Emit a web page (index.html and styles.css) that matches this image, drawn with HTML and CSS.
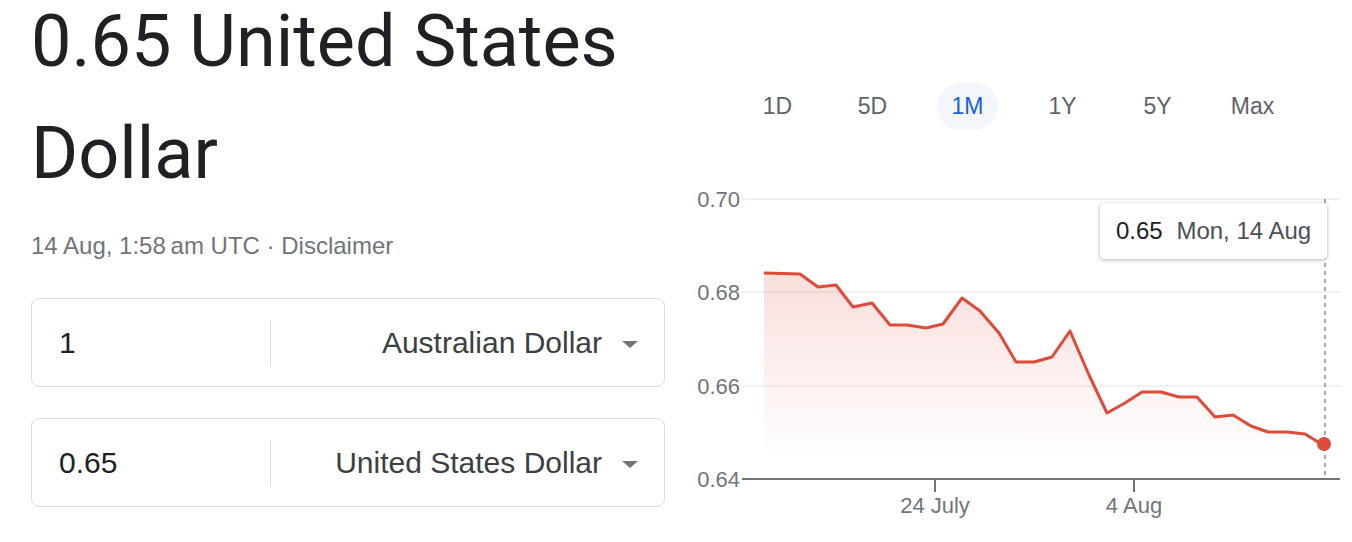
FILE: index.html
```html
<!DOCTYPE html>
<html lang="en">
<head>
    <meta charset="UTF-8">
    <meta name="viewport" content="width=device-width, initial-scale=1.0">
    <title>AUD to USD</title>
    <link rel="stylesheet" href="styles.css">
</head>
<body>
    <div class="page">
        <!-- Converter column -->
        <div class="converter">
            <h1 class="result">0.65 United States Dollar</h1>
            <div class="stamp">14 Aug, 1:58&#8201;am UTC · <span class="disclaimer">Disclaimer</span></div>

            <div class="field">
                <div class="amount">1</div>
                <div class="divider"></div>
                <div class="currency">Australian Dollar</div>
                <span class="caret"></span>
            </div>

            <div class="field">
                <div class="amount">0.65</div>
                <div class="divider"></div>
                <div class="currency">United States Dollar</div>
                <span class="caret"></span>
            </div>
        </div>

        <!-- Chart column -->
        <div class="chart">
            <div class="tabs">
                <div class="tab"><span>1D</span></div>
                <div class="tab"><span>5D</span></div>
                <div class="tab active"><span>1M</span></div>
                <div class="tab"><span>1Y</span></div>
                <div class="tab"><span>5Y</span></div>
                <div class="tab"><span>Max</span></div>
            </div>

            <div class="plot">
                <svg class="graph" width="672" height="350" viewBox="680 180 672 350">
                    <defs>
                        <linearGradient id="fade" x1="0" y1="273" x2="0" y2="450" gradientUnits="userSpaceOnUse">
                            <stop offset="0" stop-color="#db4437" stop-opacity="0.17"/>
                            <stop offset="1" stop-color="#db4437" stop-opacity="0.01"/>
                        </linearGradient>
                    </defs>

                    <!-- grid -->
                    <line class="grid" x1="742" y1="199" x2="1340" y2="199"/>
                    <line class="grid" x1="742" y1="292" x2="1340" y2="292"/>
                    <line class="grid" x1="742" y1="386" x2="1340" y2="386"/>

                    <text class="ylabel" x="740" y="207">0.70</text>
                    <text class="ylabel" x="740" y="300">0.68</text>
                    <text class="ylabel" x="740" y="394">0.66</text>
                    <text class="ylabel" x="740" y="487">0.64</text>

                    <!-- area + line -->
                    <path fill="url(#fade)" d="M764,273 L800,274 L818,287 L836,285 L853,307 L872,303 L890,325 L907,325 L926,328 L943,324 L962,298 L980,311 L999,333 L1016,362 L1034,362 L1052,357 L1070,331 L1089,375 L1107,413 L1125,403 L1142,392 L1161,392 L1179,397 L1197,397 L1215,417 L1233,415 L1251,426 L1268,432 L1287,432 L1305,434 L1323,445 L1323,450 L764,450 Z"/>
                    <polyline class="trend" points="764,273 800,274 818,287 836,285 853,307 872,303 890,325 907,325 926,328 943,324 962,298 980,311 999,333 1016,362 1034,362 1052,357 1070,331 1089,375 1107,413 1125,403 1142,392 1161,392 1179,397 1197,397 1215,417 1233,415 1251,426 1268,432 1287,432 1305,434 1323,445"/>

                    <line class="cursor" x1="1325" y1="199" x2="1325" y2="479"/>

                    <!-- x axis -->
                    <line class="axis" x1="742" y1="479" x2="1340" y2="479"/>
                    <line class="tick" x1="935" y1="479" x2="935" y2="492"/>
                    <line class="tick" x1="1134" y1="479" x2="1134" y2="492"/>
                    <text class="xlabel" x="935" y="513">24 July</text>
                    <text class="xlabel" x="1134" y="513">4 Aug</text>

                    <circle class="dot" cx="1324" cy="444" r="7"/>
                </svg>

                <div class="tooltip"><b>0.65</b> Mon, 14 Aug</div>
            </div>
        </div>
    </div>
</body>
</html>
```

FILE: styles.css
```css
body {
    margin: 0;
    padding: 0;
    background-color: #fff;
    font-family: Arial, "Liberation Sans", sans-serif;
    color: #202124;
}

.page {
    display: flex;
    height: 542px;
    overflow: hidden;
}

/* Converter */
.converter {
    width: 634px;
    padding-left: 31px;
    flex-shrink: 0;
}

.result {
    margin: -14px 0 0 0;
    font-family: Roboto, "Noto Sans", sans-serif;
    font-weight: 400;
    font-size: 72px;
    line-height: 112px;
    color: #202124;
}

.stamp {
    margin-top: 22px;
    font-size: 24px;
    line-height: 28px;
    color: #70757a;
}

.field {
    display: flex;
    align-items: center;
    height: 87px;
    border: 1px solid #dadce0;
    border-radius: 8px;
    margin-top: 31px;
    font-size: 30px;
}

.stamp + .field {
    margin-top: 38px;
}

.amount {
    width: 211px;
    padding-left: 27px;
    color: #202124;
}

.divider {
    width: 1px;
    height: 46px;
    background-color: #dadce0;
}

.currency {
    flex: 1;
    text-align: right;
    color: #3c4043;
}

.caret {
    width: 0;
    height: 0;
    margin: 3px 26px 0 20px;
    border-left: 8px solid transparent;
    border-right: 8px solid transparent;
    border-top: 7px solid #70757a;
}

/* Chart */
.chart {
    width: 672px;
    margin-left: 15px;
    flex-shrink: 0;
}

.tabs {
    display: flex;
    padding: 83px 0 0 50px;
}

.tab {
    width: 95px;
    text-align: center;
    font-size: 23px;
    color: #5f6368;
}

.tab span {
    display: inline-block;
    line-height: 47px;
    padding: 0 15px;
    border-radius: 24px;
}

.tab.active span {
    background-color: #f3f6fa;
    color: #1a62d6;
}

.plot {
    position: relative;
    margin-top: 50px;
}

.graph {
    display: block;
    font-family: Arial, "Liberation Sans", sans-serif;
}

.grid {
    stroke: #f1f1f1;
    stroke-width: 2;
}

.ylabel {
    font-size: 22px;
    fill: #70757a;
    text-anchor: end;
}

.xlabel {
    font-size: 22px;
    fill: #70757a;
    text-anchor: middle;
}

.axis, .tick {
    stroke: #70757a;
    stroke-width: 2;
}

.trend {
    fill: none;
    stroke: #dd4b39;
    stroke-width: 3;
    stroke-linejoin: round;
}

.cursor {
    stroke: #888;
    stroke-width: 1.5;
    stroke-dasharray: 4 4;
}

.dot {
    fill: #dd4b39;
}

.tooltip {
    position: absolute;
    left: 420px;
    top: 23px;
    width: 227px;
    height: 56px;
    box-sizing: border-box;
    padding-left: 16px;
    line-height: 56px;
    background-color: #fff;
    border-radius: 4px;
    box-shadow: 0 1px 4px rgba(0, 0, 0, 0.3);
    font-size: 24px;
    color: #4d5156;
    white-space: nowrap;
}

.tooltip b {
    font-weight: 400;
    color: #202124;
    margin-right: 7px;
}
```
